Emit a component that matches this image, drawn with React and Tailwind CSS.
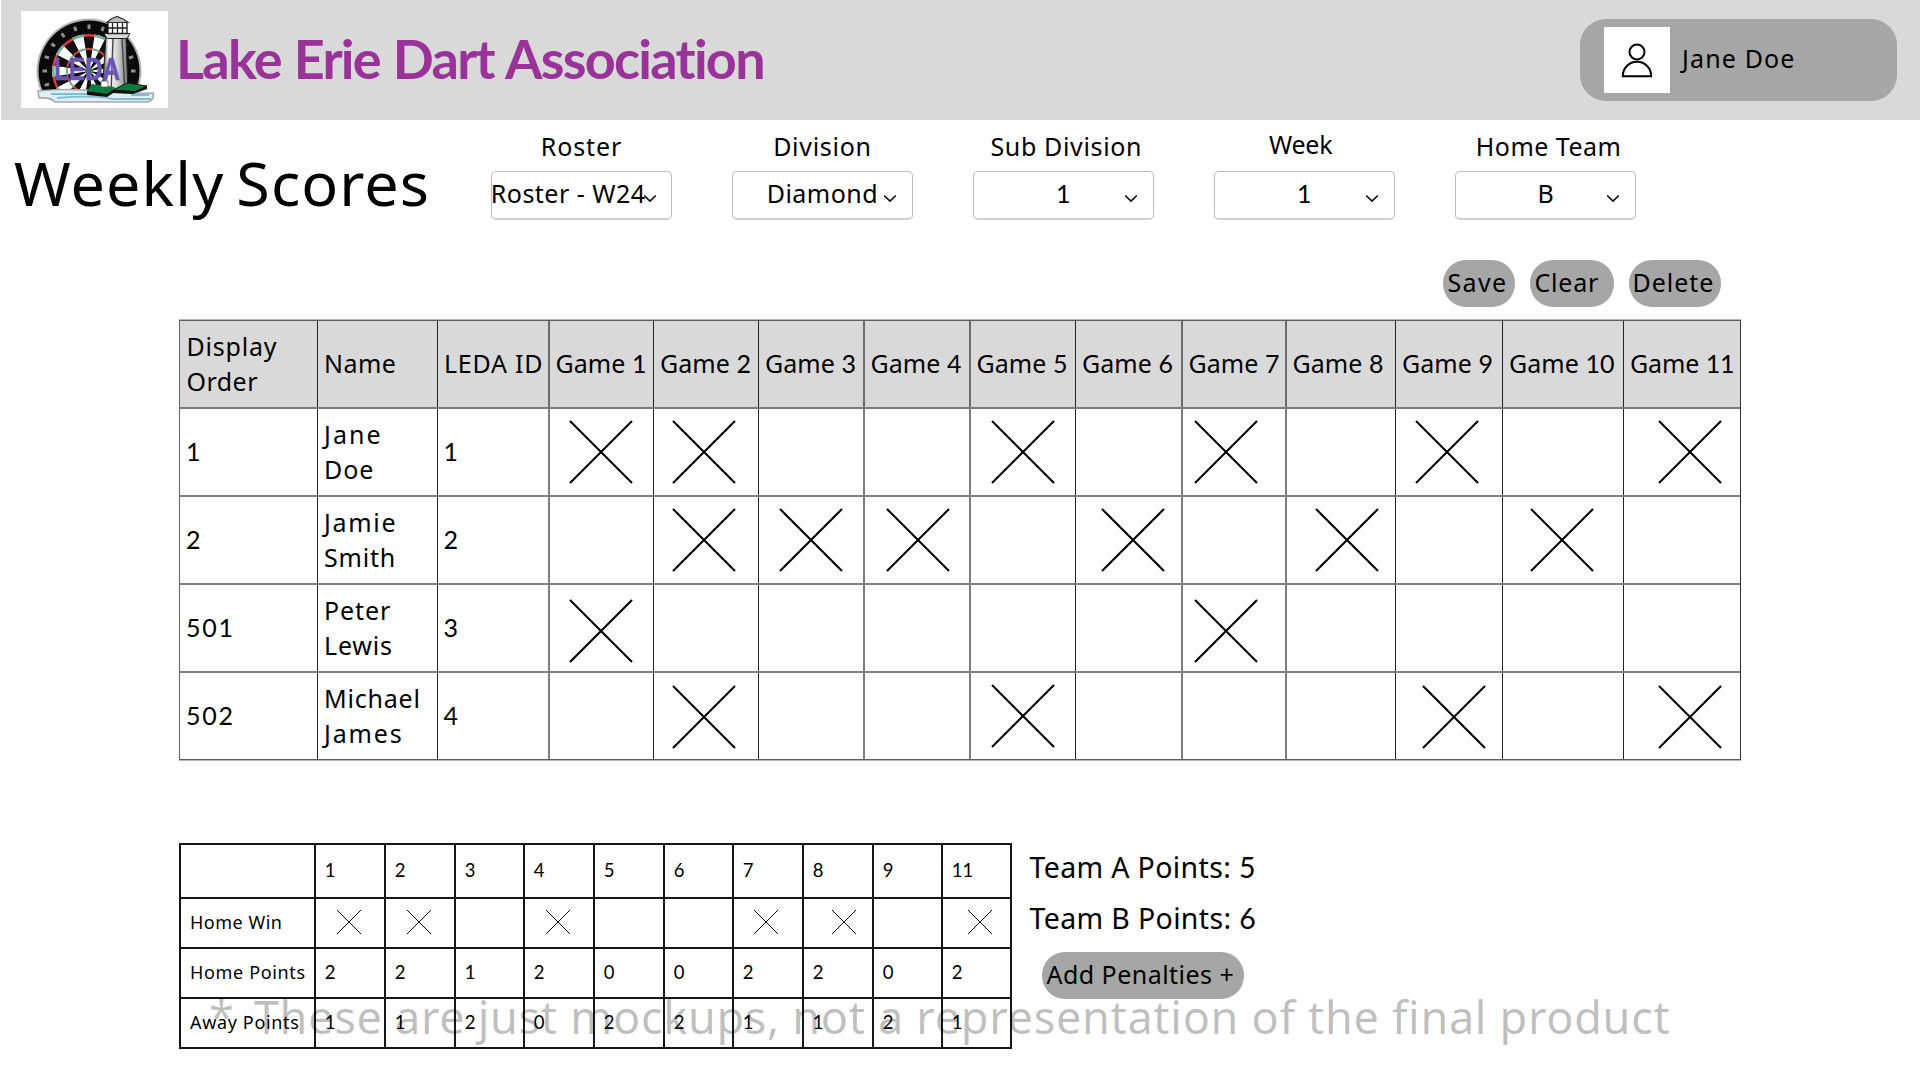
import React from "react";

const SANS = "font-['Noto_Sans','Open_Sans',sans-serif]";

/* Numerals are set in Lato for its footed "1". */
function Num({ children, className = "" }) {
  return <span className={`font-['Lato',sans-serif] ${className}`}>{children}</span>;
}

function Cross({ size, stroke, x = 0, y = 0 }) {
  return (
    <svg
      width={size}
      height={size}
      viewBox={`0 0 ${size} ${size}`}
      className="shrink-0"
      style={{ marginLeft: x, marginTop: y }}
    >
      <path
        d={`M1 1L${size - 1} ${size - 1}M${size - 1} 1L1 ${size - 1}`}
        stroke="#000"
        strokeWidth={stroke}
        fill="none"
      />
    </svg>
  );
}

const SECTORS = Array.from({ length: 20 }, (_, i) => i);

function polar(r, deg) {
  const a = (deg * Math.PI) / 180;
  return `${(68 + r * Math.sin(a)).toFixed(2)} ${(60 - r * Math.cos(a)).toFixed(2)}`;
}

function ring(r0, r1, i) {
  const a = i * 18 - 9;
  const b = a + 18;
  return `M${polar(r0, a)}L${polar(r1, a)}A${r1} ${r1} 0 0 1 ${polar(r1, b)}L${polar(r0, b)}A${r0} ${r0} 0 0 0 ${polar(r0, a)}Z`;
}

function Logo() {
  return (
    <svg width="147" height="97" viewBox="0 0 147 97" className="shrink-0 bg-white">
      <defs>
        <clipPath id="board">
          <rect x="0" y="0" width="147" height="81" />
        </clipPath>
        <linearGradient id="tower" x1="0" x2="1">
          <stop offset="0" stopColor="#111" />
          <stop offset="0.25" stopColor="#fff" />
          <stop offset="0.6" stopColor="#d0d0d0" />
          <stop offset="1" stopColor="#777" />
        </linearGradient>
      </defs>
      <g clipPath="url(#board)">
        <circle cx="68" cy="60" r="52.5" fill="#b5b5b5" />
        <circle cx="68" cy="60" r="50.5" fill="#0a0a0a" />
        {SECTORS.map((i) => (
          <g key={i}>
            <path d={ring(3, 37, i)} fill={i % 2 ? "#fff" : "#111"} />
            <path d={ring(34.5, 37, i)} fill={i % 2 ? "#6fae8c" : "#e03a3a"} />
            <path d={ring(21, 23, i)} fill={i % 2 ? "#6fae8c" : "#e03a3a"} />
            <path
              d={`M${polar(42, i * 18)}L${polar(46.5, i * 18)}`}
              stroke="#8f8f8f"
              strokeWidth="3"
            />
          </g>
        ))}
        <circle cx="68" cy="60" r="4" fill="#2f8f5b" />
        <circle cx="68" cy="60" r="2" fill="#e03a3a" />
      </g>
      <path d="M85 26L81 82H107L105 26Z" fill="url(#tower)" stroke="#222" strokeWidth="1" />
      <path d="M92 28L90 82M101 28L104 82" stroke="#444" strokeWidth="1.4" />
      <path d="M83 22.500H109L106 27.500H86Z" fill="#d8d8d8" stroke="#222" strokeWidth="1" />
      <path d="M87 11H106V22.500H87Z" fill="#fff" stroke="#222" strokeWidth="1.4" />
      <path d="M91.500 11V23M96.500 11V23M101.500 11V23M87 17H106" stroke="#222" strokeWidth="1.3" />
      <path d="M86 11.500L90 8L96 5.500L102 8L107 11.500Z" fill="#bbb" stroke="#333" strokeWidth="1.2" />
      <path d="M17 80Q45 77 80 80T132 82Q134 88 127 91H34Q30 86 18 87Z" fill="#dfeef5" stroke="#a9a9a9" strokeWidth="1.6" />
      <path d="M30 83H68M36 87Q70 84 92 88M88 88H130M110 84H128" stroke="#7dbfd6" strokeWidth="1.8" fill="none" />
      <path d="M66 80L71 73L94 76L87 84Z" fill="#0d7a3f" />
      <path d="M66 80L86 83L94 77V81L86 86L66 84Z" fill="#111" />
      <path d="M92 79L106 72L126 75L114 81Z" fill="#0d7a3f" stroke="#111" strokeWidth="1" />
      <path d="M92 79L114 80L126 75V78L112 83L92 82Z" fill="#111" />
      <path d="M80 70H87V76H80Z" fill="#fff" stroke="#555" strokeWidth="0.800" />
      <text
        x="33"
        y="69"
        textLength="66"
        lengthAdjust="spacingAndGlyphs"
        fontSize="31"
        fontWeight="700"
        fill="#6a55b4"
        stroke="#6a55b4"
        strokeWidth="0.600"
        className="font-['Liberation_Sans',sans-serif]"
      >
        LEDA
      </text>
    </svg>
  );
}

function Header() {
  return (
    <header className="ml-px flex h-[120px] items-center bg-[#d9d9d9] pl-5">
      <div className="flex h-full items-start pt-[11px]">
        <Logo />
      </div>
      <h1 className="ml-[8px] mb-[2px] whitespace-nowrap font-['Lato',sans-serif] text-[54px] font-bold tracking-[-1.75px] leading-[64px] text-[#993399] [word-spacing:1.6px]">
        Lake Erie Dart Association
      </h1>
      <div className="ml-auto mr-[23px] flex h-[82px] w-[317px] items-center rounded-[26px] bg-[#a6a6a6] pl-[24px]">
        <div className="flex size-[66px] items-center justify-center bg-white">
          <svg width="34" height="36" viewBox="0 0 34 36" fill="none" stroke="#000" strokeWidth="2">
            <circle cx="17" cy="10" r="7.500" />
            <path d="M2.800 34.200H31.200C31.200 26 25 19.800 17 19.800S2.800 26 2.800 34.200Z" />
          </svg>
        </div>
        <span className="ml-[12px] mb-[3px] whitespace-nowrap text-[25px] leading-[35px] tracking-[1.15px]">
          Jane Doe
        </span>
      </div>
    </header>
  );
}

const FILTERS = [
  { label: "Roster", value: "Roster - W24", labelClass: "tracking-[0.9px]", valueClass: "w-full text-left tracking-[0.48px] -ml-[2.500px]" },
  { label: "Division", value: "Diamond", labelClass: "tracking-[0.71px]", valueClass: "tracking-[0.47px]" },
  { label: "Sub Division", value: "1", labelClass: "pl-[6px] tracking-[0.65px]", valueClass: "" },
  { label: "Week", value: "1", labelClass: "pr-[7px] pb-[4px] tracking-[-0.2px]", valueClass: "" },
  { label: "Home Team", value: "B", labelClass: "pl-[7px] tracking-[0.46px]", valueClass: "pl-[1px]" },
];

function Filter({ label, value, labelClass, valueClass }) {
  return (
    <div className="flex w-[181px] flex-col">
      <div className="flex h-[35px] items-center justify-center text-[25px] leading-[35px] whitespace-nowrap">
        <span className={labelClass}>{label}</span>
      </div>
      <div className="relative mt-[7px] flex h-[49px] items-center justify-center rounded-[5px] border border-b-2 border-[#bdbdbd] border-b-[#d0d0d0] bg-white pb-[3px] text-[25px] leading-[35px] whitespace-nowrap">
        <span className={valueClass}>{value === "1" ? <Num>1</Num> : value}</span>
        <svg
          className="absolute right-[14.500px] top-[21.500px]"
          width="14"
          height="10"
          viewBox="0 0 14 10"
          fill="none"
          stroke="#10131c"
          strokeWidth="1.700"
          strokeLinecap="round"
          strokeLinejoin="round"
        >
          <path d="M1.700 2L7 7.200L12.300 2" />
        </svg>
      </div>
    </div>
  );
}

const COLS =
  "grid grid-cols-[138px_120px_111px_105px_105px_105px_106px_106px_106px_104px_110px_107px_121px_117px]";

const THIN = "border-l border-black/85";
const WIDE = "border-l-2 border-l-black/50";
const EDGES = ["border-l border-[#666666]", THIN, THIN, WIDE, THIN, THIN, WIDE, WIDE, THIN, WIDE, WIDE, THIN, THIN, THIN];

const PLAYERS = [
  { order: "1", name: ["Jane", "Doe"], id: "1", marks: { 1: [19.3, 10.5], 2: [17.9, 11.2], 5: [20, 10.5], 7: [11.2, 10.5], 9: [19.3, 10.5], 11: [33.5, 10.5] } },
  { order: "2", name: ["Jamie", "Smith"], id: "2", marks: { 2: [17.9, 11], 3: [20, 11], 4: [21.3, 11], 6: [24.7, 11], 8: [28.3, 11], 10: [26.5, 11] } },
  { order: "501", name: ["Peter", "Lewis"], id: "3", marks: { 1: [19.3, 14], 7: [11.2, 14] } },
  { order: "502", name: ["Michael", "James"], id: "4", marks: { 2: [17.9, 12.2], 5: [20, 10.7], 9: [26, 12.2], 11: [33.5, 12.2] } },
];

const NAME_TRACKING = {
  Jane: "tracking-[2.1px]",
  Doe: "tracking-[0.9px]",
  Jamie: "tracking-[1.7px]",
  Smith: "tracking-[0.8px]",
  Peter: "tracking-[0.9px]",
  Lewis: "tracking-[0.8px]",
  Michael: "tracking-[0.8px]",
  James: "tracking-[1.85px]",
};

const GAMES = [1, 2, 3, 4, 5, 6, 7, 8, 9, 10, 11];

function ScoreTable() {
  return (
    <div className="ml-[179px] w-[1562px] border-y border-[#b8b8b8]">
      <div className="border-b border-r border-t border-[#5f5f5f] border-r-black/80 text-[25px] leading-[35px] whitespace-nowrap">
        <div className={`${COLS} h-[88px] border-b-2 border-[#7b7b7b] bg-[#d9d9d9]`}>
          <div className={`${EDGES[0]} flex flex-col justify-center pb-px pl-[6.400px]`}>
            <span className="tracking-[0.8px]">Display</span>
            <span className="tracking-[0.5px]">Order</span>
          </div>
          <div className={`${EDGES[1]} flex items-center pb-px pl-[6px] tracking-[0.43px]`}>Name</div>
          <div className={`${EDGES[2]} flex items-center pb-px pl-[6px] tracking-[0.75px]`}>LEDA ID</div>
          {GAMES.map((g) => (
            <div
              key={g}
              className={`${EDGES[g + 2]} flex items-center pb-px ${EDGES[g + 2] === WIDE ? "pl-[5.500px]" : "pl-[6px]"}`}
            >
              <span className={g === 11 ? "tracking-[-0.1px]" : "tracking-[0.04px]"}>
                Game <Num>{g}</Num>
              </span>
            </div>
          ))}
        </div>
        {PLAYERS.map((p, r) => (
          <div
            key={p.id}
            className={`${COLS} ${r === 3 ? "h-[86px]" : "h-[88px] border-b-2 border-[#808080]"}`}
          >
            <div className={`${EDGES[0]} flex items-center pb-[2px] pl-[6px] tracking-[1.7px]`}>
              <Num>{p.order}</Num>
            </div>
            <div className={`${EDGES[1]} flex flex-col justify-center pl-[6px]`}>
              <span className={NAME_TRACKING[p.name[0]]}>{p.name[0]}</span>
              <span className={NAME_TRACKING[p.name[1]]}>{p.name[1]}</span>
            </div>
            <div className={`${EDGES[2]} flex items-center pb-[2px] pl-[5.500px]`}>
              <Num>{p.id}</Num>
            </div>
            {GAMES.map((g) => (
              <div key={g} className={`${EDGES[g + 2]} flex items-start`}>
                {p.marks[g] && <Cross size={64} stroke={2.1} x={p.marks[g][0]} y={p.marks[g][1]} />}
              </div>
            ))}
          </div>
        ))}
      </div>
    </div>
  );
}

const POINT_COLS = "grid grid-cols-[135px_70px_70px_69px_70px_70px_69px_70px_70px_69px_69px]";
const HEADS = ["1", "2", "3", "4", "5", "6", "7", "8", "9", "11"];
const HOME_WIN = [20.3, 19.7, null, 19.8, null, null, 19.2, 27, null, 23.5];
const HOME_POINTS = [2, 2, 1, 2, 0, 0, 2, 2, 0, 2];
const AWAY_POINTS = [1, 1, 2, 0, 2, 2, 1, 1, 2, 1];

function PointRow({ label, labelClass = "", values, height }) {
  return (
    <div className={`${POINT_COLS} ${height} border-b-2 border-[#161616]`}>
      <div className={`flex items-center border-l-2 border-[#161616] pb-[2px] pl-[9px] ${labelClass}`}>{label}</div>
      {values.map((v, i) => (
        <div key={i} className="flex items-center border-l-2 border-[#161616] pb-[2px] pl-[8.700px]">
          <Num className="text-[18.500px]">{v}</Num>
        </div>
      ))}
    </div>
  );
}

function PointsTable() {
  return (
    <div className="w-[833px] border-r-2 border-t-2 border-[#161616] text-[18px] leading-[26px] whitespace-nowrap">
      <PointRow label="" values={HEADS} height="h-[54px]" />
      <div className={`${POINT_COLS} h-[50px] border-b-2 border-[#161616]`}>
        <div className="flex items-center border-l-2 border-[#161616] pb-[2px] pl-[9px] tracking-[0.5px]">Home Win</div>
        {HOME_WIN.map((x, i) => (
          <div key={i} className="flex items-start border-l-2 border-[#161616]">
            {x !== null && <Cross size={26} stroke={0.95} x={x} y={10} />}
          </div>
        ))}
      </div>
      <PointRow label="Home Points" labelClass="tracking-[0.65px]" values={HOME_POINTS} height="h-[50px]" />
      <PointRow label="Away Points" labelClass="tracking-[0.65px]" values={AWAY_POINTS} height="h-[50px]" />
    </div>
  );
}

function Pill({ children, className }) {
  return (
    <button
      className={`flex h-[47px] items-center rounded-[23px] bg-[#a6a6a6] pb-[2px] text-[25px] leading-[35px] whitespace-nowrap ${className}`}
    >
      {children}
    </button>
  );
}

export default function App() {
  return (
    <div className={`relative h-[1080px] w-[1920px] overflow-hidden bg-white text-black ${SANS}`}>
      <Header />
      <div className="flex h-[140px] items-start">
        <h2 className="ml-[14px] mt-[23px] w-[477px] whitespace-nowrap text-[61px] leading-[80px] tracking-[1.1px] [word-spacing:-5px]">
          Weekly Scores
        </h2>
        <div className="mt-[9px] flex gap-[59.900px]">
          {FILTERS.map((f) => (
            <Filter key={f.label} {...f} />
          ))}
        </div>
      </div>
      <div className="flex h-[59px] items-start pl-[1443px]">
        <Pill className="w-[72px] pl-[4.500px] tracking-[1.35px]">Save</Pill>
        <Pill className="ml-[15px] w-[84px] pl-[4.500px] tracking-[0.78px]">Clear</Pill>
        <Pill className="ml-[14.500px] w-[92.500px] pl-[4px] tracking-[0.95px]">Delete</Pill>
      </div>
      <ScoreTable />
      <div className="mt-[82px] flex items-start pl-[179px]">
        <PointsTable />
        <div className="-mt-px ml-[17.500px] flex flex-col items-start whitespace-nowrap text-[28.500px] leading-[51px]">
          <div className="tracking-[0.36px]">
            Team A Points: <Num>5</Num>
          </div>
          <div className="tracking-[0.36px]">
            Team B Points: <Num>6</Num>
          </div>
          <Pill className="ml-[12px] mt-[7.500px] w-[202px] pl-[5px] tracking-[0.47px]">Add Penalties +</Pill>
        </div>
      </div>
      <p className="pointer-events-none absolute left-[209px] top-[987px] whitespace-pre text-[45px] leading-[60px] tracking-[0.7px] text-black/25">
        <span className="mr-[7px]">*</span> These are just mockups, not a representation of the final product
      </p>
    </div>
  );
}
